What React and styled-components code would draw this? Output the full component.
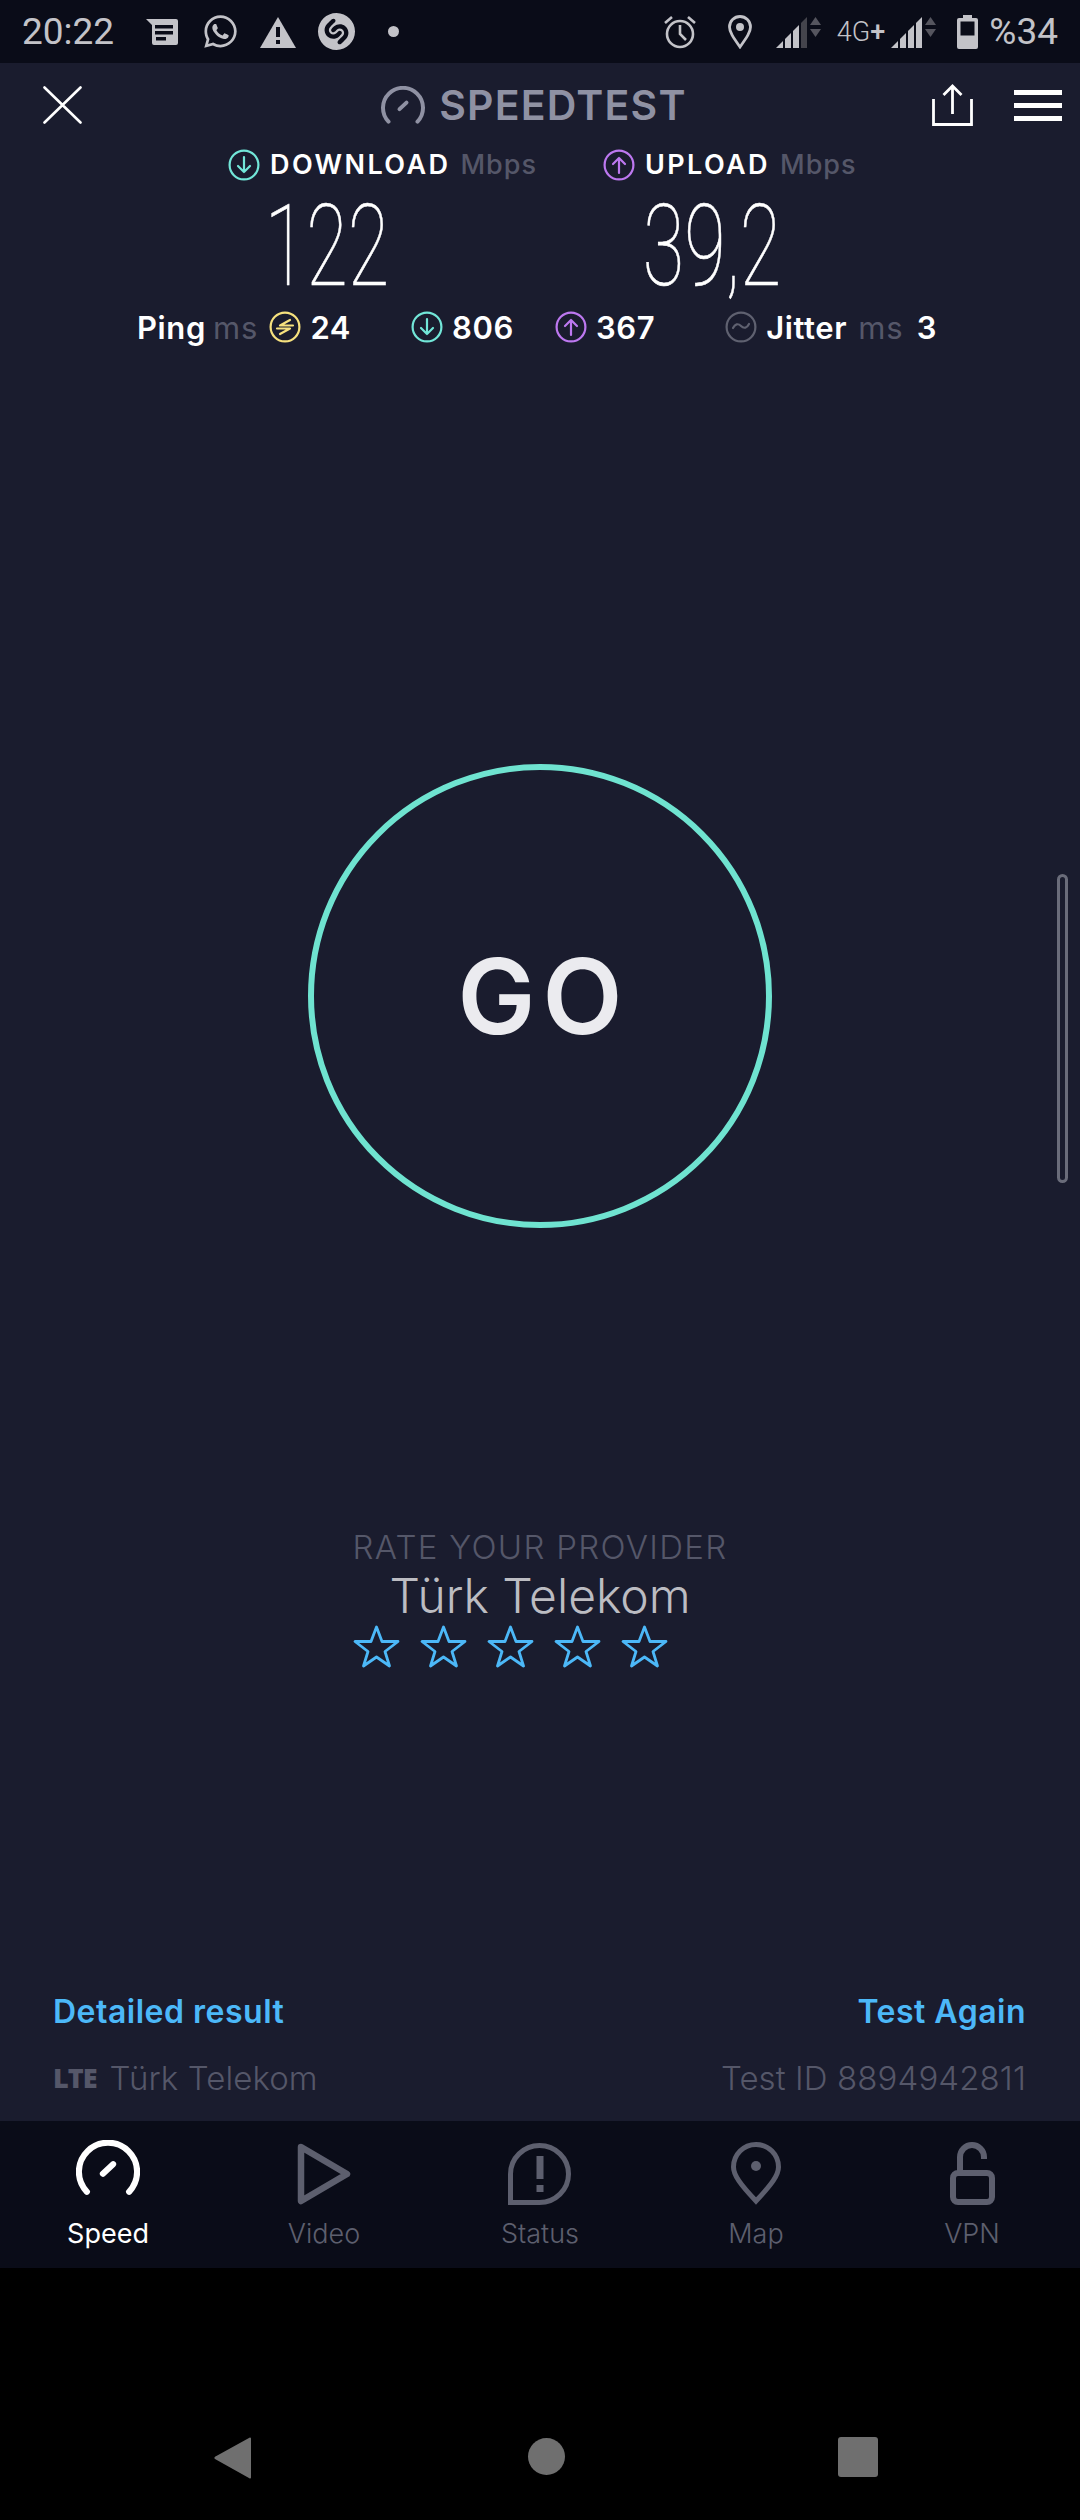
import React from "react";
import styled, { createGlobalStyle } from "styled-components";
import { FaWhatsapp } from "react-icons/fa";
import { SiShazam } from "react-icons/si";

const BG = "#1a1c2e";
const DARK = "#0a0c18";
const GREY = "#555769";
const TEAL = "#72e6d8";
const PURPLE = "#bd78f0";
const YELLOW = "#f6e17e";
const BLUE = "#4cb8f8";
const STATUS = "#c3c3c8";

const GlobalStyle = createGlobalStyle`
  html, body { margin: 0; padding: 0; background: #000; }
  body { font-family: Inter, "Liberation Sans", sans-serif; }
`;

const Page = styled.div`
  width: 1080px;
  height: 2520px;
  display: flex;
  flex-direction: column;
  background: #000;
  overflow: hidden;
`;

const StatusBar = styled.div`
  height: 63px;
  background: ${DARK};
  color: ${STATUS};
  display: flex;
  align-items: center;
  justify-content: space-between;
  padding: 0 22px;
  font-family: Roboto, sans-serif;
  box-sizing: border-box;
`;

const StatusGroup = styled.div`
  display: flex;
  align-items: center;
`;

const StatusText = styled.span`
  font-size: ${p => p.$size || 37}px;
  line-height: 40px;
  margin-left: ${p => p.$left || 0}px;
  font-weight: ${p => p.$weight || 400};
`;

const StatusSlot = styled.span`
  display: flex;
  margin-left: ${p => p.$left || 0}px;
`;

const Main = styled.div`
  height: 2058px;
  background: ${BG};
  position: relative;
  display: flex;
  flex-direction: column;
`;

const Header = styled.div`
  height: 84px;
  display: flex;
  align-items: center;
  justify-content: space-between;
  padding: 0 18px 0 43px;
  box-sizing: border-box;
`;

const Brand = styled.div`
  display: flex;
  align-items: center;
  gap: 14px;
  color: #8f91a3;
  font-size: 41px;
  font-weight: 600;
  letter-spacing: 1.2px;
  margin-left: 54px;
`;

const HeaderActions = styled.div`
  display: flex;
  align-items: center;
  gap: 41px;
`;

const Burger = styled.div`
  width: 48px;
  display: flex;
  flex-direction: column;
  gap: 8px;
  span {
    display: block;
    height: 5px;
    background: #fff;
  }
`;

const Speeds = styled.div`
  display: grid;
  grid-template-columns: 375px 375px;
  padding: 2px 0 0 228px;
`;

const SpeedCol = styled.div`
  display: flex;
  flex-direction: column;
`;

const SpeedLabel = styled.div`
  height: 31px;
  display: flex;
  align-items: center;
  gap: 10px;
  color: #fff;
  font-size: 27px;
  font-weight: 600;
  letter-spacing: 2.4px;
`;

const Unit = styled.span`
  color: ${GREY};
  font-weight: ${p => p.$weight || 500};
  margin-left: ${p => p.$left || 0}px;
  letter-spacing: 1px;
`;

const BigNumber = styled.div`
  height: 132px;
  width: ${p => p.$width}px;
  display: flex;
  align-items: center;
  justify-content: center;
  font-family: Roboto, sans-serif;
  font-weight: 100;
  font-size: 113px;
  line-height: 1;
  color: #fff;
  transform: scaleX(0.67);
  -webkit-text-stroke: 0.6px #fff;
`;

const StatsRow = styled.div`
  height: 30px;
  display: flex;
  align-items: center;
  padding-left: 137px;
  font-size: 31px;
  font-weight: 600;
  letter-spacing: 0.6px;
  color: #fff;
`;

const Stat = styled.span`
  margin-left: ${p => p.$left || 0}px;
  display: flex;
  align-items: center;
`;

const GoRing = styled.div`
  width: 464px;
  height: 464px;
  box-sizing: border-box;
  border: 6px solid #6fe3d0;
  border-radius: 50%;
  margin: 422px auto 0;
  padding-left: 7px;
  display: flex;
  align-items: center;
  justify-content: center;
  color: #ebebef;
  font-size: 104px;
  font-weight: 600;
  letter-spacing: 7px;
`;

const Rate = styled.div`
  margin-top: 301px;
  display: flex;
  flex-direction: column;
  align-items: center;
`;

const RateTitle = styled.div`
  color: ${GREY};
  font-size: 33px;
  font-weight: 300;
  letter-spacing: 1.3px;
  line-height: 36px;
`;

const Provider = styled.div`
  color: #bcbcc2;
  font-size: 48px;
  font-weight: 300;
  line-height: 54px;
  margin-top: 4px;
`;

const Stars = styled.div`
  display: flex;
  gap: 20px;
  margin: 2px 0 0 -59px;
`;

const FooterRow = styled.div`
  display: flex;
  justify-content: space-between;
  padding: 0 54px 0 53px;
  margin-top: ${p => p.$top}px;
`;

const Action = styled.span`
  color: ${BLUE};
  font-size: 32px;
  font-weight: 600;
  letter-spacing: 0.5px;
  line-height: 36px;
`;

const Meta = styled.span`
  color: ${GREY};
  font-size: 33px;
  font-weight: 300;
  letter-spacing: 0.1px;
  line-height: 36px;
  display: flex;
  align-items: center;
`;

const Lte = styled.span`
  font-family: "Open Sans", sans-serif;
  font-weight: 800;
  font-size: 27px;
  letter-spacing: -1px;
  margin-right: 13px;
`;

const Scrollbar = styled.div`
  position: absolute;
  left: 1057px;
  top: 811px;
  width: 11px;
  height: 309px;
  box-sizing: border-box;
  border: 3px solid #6a6c7a;
  border-radius: 6px;
`;

const Nav = styled.div`
  height: 147px;
  background: ${DARK};
  display: grid;
  grid-template-columns: repeat(5, 216px);
`;

const NavItem = styled.div`
  display: flex;
  flex-direction: column;
  align-items: center;
  color: ${p => (p.$active ? "#fff" : "#5d5f6e")};
  font-size: 27px;
  font-weight: ${p => (p.$active ? 400 : 300)};
`;

const NavIcon = styled.div`
  height: 96px;
  display: flex;
  align-items: flex-end;
  padding-bottom: ${p => p.$bottom || 12}px;
  box-sizing: border-box;
`;

const SystemBar = styled.div`
  height: 252px;
  box-sizing: border-box;
  padding: 169px 202px 0 214px;
  background: #000;
  display: flex;
  align-items: flex-start;
  justify-content: space-between;
`;

const HomeDot = styled.div`
  width: 37px;
  height: 37px;
  margin: 1px 0 0 4px;
  border-radius: 50%;
  background: #6f6f6f;
`;

const RecentSquare = styled.div`
  width: 40px;
  height: 40px;
  border-radius: 3px;
  background: #6f6f6f;
`;

const Circle = ({ color, children }) => (
  <svg width="32" height="32" viewBox="0 0 32 32" fill="none" stroke={color} strokeWidth="2.2" strokeLinecap="round" strokeLinejoin="round">
    <circle cx="16" cy="16" r="14.4" />
    {children}
  </svg>
);

const DownIcon = () => (
  <Circle color={TEAL}>
    <path d="M16 8v15M10 17l6 6 6-6" />
  </Circle>
);

const UpIcon = () => (
  <Circle color={PURPLE}>
    <path d="M16 24V9M10 15l6-6 6 6" />
  </Circle>
);

const PingIcon = () => (
  <Circle color={YELLOW}>
    <path d="M21 9l-10 5.500h13M11 23l10-5.500H8" />
  </Circle>
);

const JitterIcon = () => (
  <Circle color="#5f6170">
    <path d="M8 17c2-4 5-5 8-2s6 2 8-2" />
  </Circle>
);

const Gauge = ({ size = 44, color, width = 4 }) => (
  <svg width={size} height={size * 0.87} viewBox="0 0 44 38" fill="none" stroke={color} strokeWidth={width} strokeLinecap="round">
    <path d="M7.500 35.500a20 20 0 1 1 29 0" />
    <path d="M18.500 23l7-6.500" />
  </svg>
);

const Signal = ({ dim }) => (
  <svg width="45" height="34" viewBox="0 0 45 34">
    <path d="M0 33L7 26V33Z" fill={STATUS} />
    <path d="M9 24L15 18V33H9Z" fill={STATUS} />
    <path d="M17 16L23 10V33H17Z" fill={STATUS} />
    <path d="M25 8L31 2V33H25Z" fill={dim ? "#44444c" : STATUS} />
    <path d="M34 10L39.500 2L45 10ZM34 14L39.500 22L45 14Z" fill="#55555e" />
  </svg>
);

const Star = () => (
  <svg width="47" height="43" viewBox="0 0 47 43" fill="none" stroke={BLUE} strokeWidth="2.800" strokeLinejoin="round">
    <path d="M23.500 2L29 16.500H45L32 26.500L36.500 41L23.500 32L10.500 41L15 26.500L2 16.500H18Z" />
  </svg>
);

export default function App() {
  return (
    <Page>
      <GlobalStyle />
      <StatusBar>
        <StatusGroup>
          <StatusText>20:22</StatusText>
          <StatusSlot $left={32}>
            <svg width="32" height="28" viewBox="0 0 32 28">
              <path d="M0 1H30a2 2 0 0 1 2 2V25a2 2 0 0 1-2 2H8a2 2 0 0 1-2-2V7Z" fill={STATUS} />
              <path d="M9 7H27V10.500H9ZM9 13H27V16.500H9ZM10 19H20V22.500H10Z" fill={DARK} />
            </svg>
          </StatusSlot>
          <StatusSlot $left={24}>
            <FaWhatsapp size={37} />
          </StatusSlot>
          <StatusSlot $left={21}>
            <svg width="36" height="32" viewBox="0 0 36 32">
              <path d="M18 1L36 32H0Z" fill={STATUS} />
              <path d="M16 11H20V21H16ZM16 24H20V28H16Z" fill={DARK} />
            </svg>
          </StatusSlot>
          <StatusSlot $left={22}>
            <SiShazam size={37} />
          </StatusSlot>
          <StatusSlot $left={33}>
            <svg width="11" height="11" viewBox="0 0 11 11">
              <circle cx="5.500" cy="5.500" r="5.500" fill={STATUS} />
            </svg>
          </StatusSlot>
        </StatusGroup>
        <StatusGroup>
          <svg width="32" height="34" viewBox="0 0 32 34" fill="none" stroke={STATUS} strokeWidth="2.600">
            <circle cx="16" cy="19" r="13" />
            <path d="M16 10v9l6 6M1 8l7-6M31 8l-7-6" />
          </svg>
          <StatusSlot $left={32}>
            <svg width="24" height="34" viewBox="0 0 24 34" fill="none" stroke={STATUS} strokeWidth="2.800">
              <path d="M12 32C5 22 1.500 17 1.500 12a10.500 10.500 0 0 1 21 0C22.500 17 19 22 12 32Z" />
              <circle cx="12" cy="12" r="4" fill={STATUS} stroke="none" />
            </svg>
          </StatusSlot>
          <StatusSlot $left={24}>
            <Signal dim />
          </StatusSlot>
          <StatusText $size={27} $left={16} $weight={300}>4G</StatusText>
          <StatusText $size={27} $weight={500}>+</StatusText>
          <StatusSlot $left={6}>
            <Signal />
          </StatusSlot>
          <StatusSlot $left={21}>
            <svg width="21" height="34" viewBox="0 0 21 34" fill="none">
              <path d="M6 0H15V3H19a2 2 0 0 1 2 2V32a2 2 0 0 1-2 2H2a2 2 0 0 1-2-2V5a2 2 0 0 1 2-2H6Z" fill={STATUS} />
              <rect x="3.500" y="6.500" width="14" height="14" fill={DARK} />
            </svg>
          </StatusSlot>
          <StatusText $left={11}>%34</StatusText>
        </StatusGroup>
      </StatusBar>

      <Main>
        <Header>
          <svg width="39" height="38" viewBox="0 0 39 38" stroke="#fff" strokeWidth="2.600" strokeLinecap="round">
            <path d="M1.500 1.500l36 35M37.500 1.500l-36 35" />
          </svg>
          <Brand>
            <Gauge color="#8f91a3" />
            SPEEDTEST
          </Brand>
          <HeaderActions>
            <svg width="41" height="42" viewBox="0 0 41 42" fill="none" stroke="#fff" strokeWidth="2.800">
              <path d="M1.500 15V40.500H39.500V15M20.500 30V2M11.500 11l9-9 9 9" />
            </svg>
            <Burger>
              <span />
              <span />
              <span />
            </Burger>
          </HeaderActions>
        </Header>

        <Speeds>
          <SpeedCol>
            <SpeedLabel>
              <DownIcon />
              DOWNLOAD
              <Unit>Mbps</Unit>
            </SpeedLabel>
            <BigNumber $width={198}>122</BigNumber>
          </SpeedCol>
          <SpeedCol>
            <SpeedLabel>
              <UpIcon />
              UPLOAD
              <Unit>Mbps</Unit>
            </SpeedLabel>
            <BigNumber $width={218}>39,2</BigNumber>
          </SpeedCol>
        </Speeds>

        <StatsRow>
          Ping
          <Unit $left={7} $weight={400}>ms</Unit>
          <Stat $left={11}><PingIcon /></Stat>
          <Stat $left={9}>24</Stat>
          <Stat $left={60}><DownIcon /></Stat>
          <Stat $left={9}>806</Stat>
          <Stat $left={41}><UpIcon /></Stat>
          <Stat $left={9}>367</Stat>
          <Stat $left={70}><JitterIcon /></Stat>
          <Stat $left={9}>Jitter</Stat>
          <Unit $left={11} $weight={400}>ms</Unit>
          <Stat $left={13}>3</Stat>
        </StatsRow>

        <GoRing>GO</GoRing>

        <Rate>
          <RateTitle>RATE YOUR PROVIDER</RateTitle>
          <Provider>Türk Telekom</Provider>
          <Stars>
            <Star />
            <Star />
            <Star />
            <Star />
            <Star />
          </Stars>
        </Rate>

        <FooterRow $top={326}>
          <Action>Detailed result</Action>
          <Action>Test Again</Action>
        </FooterRow>
        <FooterRow $top={30}>
          <Meta><Lte>LTE</Lte>Türk Telekom</Meta>
          <Meta>Test ID 8894942811</Meta>
        </FooterRow>

        <Scrollbar />
      </Main>

      <Nav>
        <NavItem $active>
          <NavIcon $bottom={21}>
            <Gauge size={64} color="#fff" width={4.200} />
          </NavIcon>
          Speed
        </NavItem>
        <NavItem>
          <NavIcon>
            <svg width="54" height="62" viewBox="0 0 54 62" fill="none" stroke="#5d5f6e" strokeWidth="6.500" strokeLinejoin="round">
              <path d="M4 4L50 31L4 58Z" />
            </svg>
          </NavIcon>
          Video
        </NavItem>
        <NavItem>
          <NavIcon>
            <svg width="64" height="62" viewBox="0 0 64 62" fill="none" stroke="#5d5f6e" strokeWidth="5">
              <path d="M2.500 59.500V31a29 28.500 0 1 1 29 28.500Z" />
              <path d="M32 13V36M32 42V49" strokeWidth="7" />
            </svg>
          </NavIcon>
          Status
        </NavItem>
        <NavItem>
          <NavIcon>
            <svg width="50" height="63" viewBox="0 0 50 63" fill="none" stroke="#5d5f6e" strokeWidth="5">
              <path d="M25 59C9 42 2.500 33 2.500 25a22.500 22.500 0 0 1 45 0C47.500 33 41 42 25 59Z" />
              <circle cx="25" cy="24" r="5" fill="#5d5f6e" stroke="none" />
            </svg>
          </NavIcon>
          Map
        </NavItem>
        <NavItem>
          <NavIcon>
            <svg width="45" height="63" viewBox="0 0 45 63" fill="none" stroke="#5d5f6e" strokeWidth="6">
              <rect x="3" y="31" width="39" height="29" rx="5" />
              <path d="M10 31V15A12 12 0 0 1 34 15V17" />
            </svg>
          </NavIcon>
          VPN
        </NavItem>
      </Nav>

      <SystemBar>
        <svg width="37" height="42" viewBox="0 0 37 42">
          <path d="M36 0.500a1 1 0 0 1 1 1V40.500a1 1 0 0 1-1.600 0.800L1 22a1.500 1.500 0 0 1 0-2.200L35.400 0.700Z" fill="#6f6f6f" />
        </svg>
        <HomeDot />
        <RecentSquare />
      </SystemBar>
    </Page>
  );
}
